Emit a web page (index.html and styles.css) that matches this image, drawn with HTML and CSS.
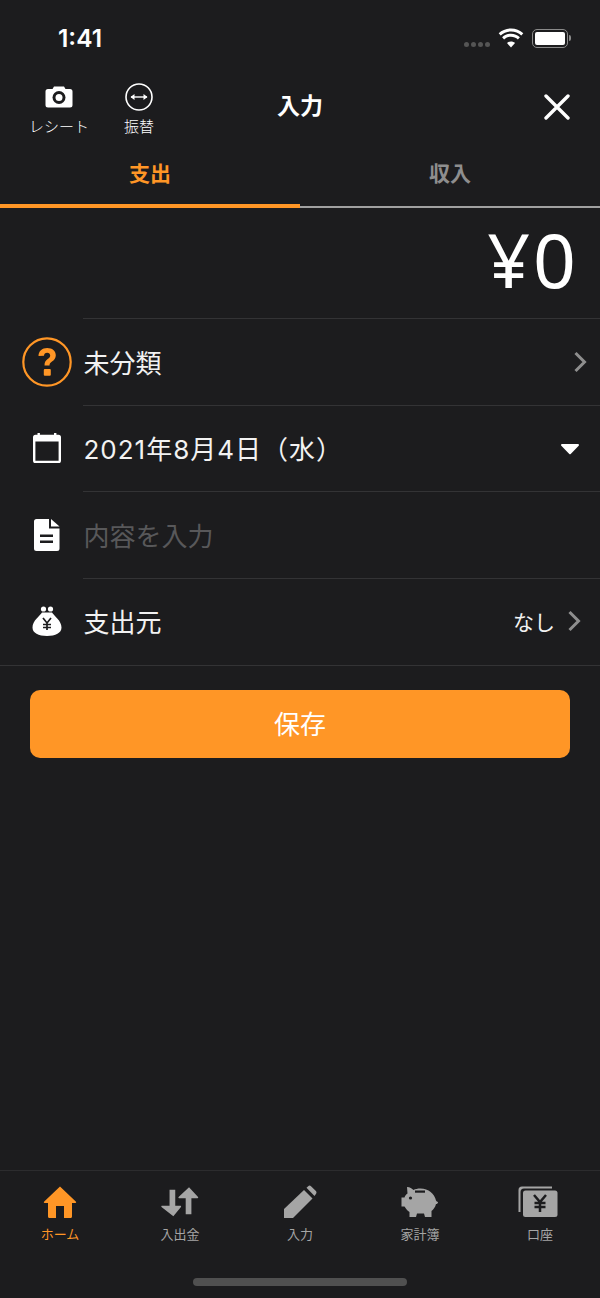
FILE: index.html
```html
<!DOCTYPE html>
<html lang="ja">
<head>
    <meta charset="UTF-8">
    <meta name="viewport" content="width=device-width, initial-scale=1.0">
    <title>入力</title>
    <link rel="stylesheet" href="styles.css">
</head>
<body>
    <div class="screen">
        <div class="status-bar">
            <span class="time">1:41</span>
            <div class="status-icons">
                <div class="signal"><i></i><i></i><i></i><i></i></div>
                <svg width="26" height="20" viewBox="0 0 26 20"><path d="M13 3.500c4 0 7.500 1.500 10.300 4l2-2.300C22 2.300 17.700.5 13 .5S4 2.300.7 5.200l2 2.300c2.800-2.500 6.300-4 10.300-4z" fill="#fff"/><path d="M13 8.800c2.700 0 5.100 1 6.900 2.700l2-2.300C19.500 7.100 16.400 5.800 13 5.800S6.500 7.100 4.100 9.200l2 2.300c1.800-1.700 4.200-2.700 6.900-2.700z" fill="#fff"/><path d="M13 13.500c-1.500 0-2.900.5-4 1.500l4 4.500 4-4.500c-1.100-1-2.500-1.500-4-1.500z" fill="#fff"/></svg>
                <div class="battery"><div class="battery-fill"></div></div>
                <div class="battery-cap"></div>
            </div>
        </div>

        <div class="nav">
            <div class="nav-left">
                <div class="nav-btn">
                    <svg width="28" height="24" viewBox="0 0 28 24"><path d="M9 1.500h10l1.500 2.500H25a2.500 2.500 0 0 1 2.500 2.500v13.500A2.500 2.500 0 0 1 25 22.500H3A2.500 2.500 0 0 1 .5 20V6.500A2.500 2.500 0 0 1 3 4h4.500z" fill="#fff"/><circle cx="14" cy="12.500" r="6.500" fill="#1c1c1e"/><circle cx="14" cy="12.500" r="3.500" fill="#fff"/></svg>
                    <span>レシート</span>
                </div>
                <div class="nav-btn transfer">
                    <svg width="28" height="28" viewBox="0 0 28 28"><circle cx="14" cy="14" r="13" fill="none" stroke="#fff" stroke-width="1.600"/><path d="M6 14h16" stroke="#fff" stroke-width="1.400"/><path d="M9.500 11l-4 3 4 3zM18.500 11l4 3-4 3z" fill="#fff"/></svg>
                    <span>振替</span>
                </div>
            </div>
            <h1 class="nav-title">入力</h1>
            <svg class="close" width="26" height="26" viewBox="0 0 26 26"><path d="M2 2l22 22M24 2L2 24" stroke="#fff" stroke-width="3.400" stroke-linecap="round"/></svg>
        </div>

        <div class="tabs">
            <div class="tab active">支出</div>
            <div class="tab">収入</div>
        </div>

        <div class="amount">¥0</div>

        <div class="row first">
            <div class="row-icon">
                <svg width="50" height="50" viewBox="0 0 50 50"><circle cx="25" cy="25" r="23.700" fill="none" stroke="#ff9626" stroke-width="2.200"/><path d="M16.500 19c0-5 3.600-8 8.700-8 5 0 8.600 2.800 8.600 7.200 0 3.200-1.700 4.800-3.800 6.300-1.800 1.300-2.500 2.100-2.500 4H22.500c0-3.400 1.100-4.900 3.200-6.400 1.600-1.100 2.500-1.900 2.500-3.500 0-1.700-1.200-2.800-3-2.800-2 0-3.100 1.200-3.200 2.900z" fill="#ff9626"/><rect x="21.800" y="32" width="7" height="6.800" rx="1" fill="#ff9626"/></svg>
            </div>
            <div class="row-text">未分類</div>
            <svg class="chevron" width="14" height="22" viewBox="0 0 14 22"><path d="M2.500 2l9 9-9 9" fill="none" stroke="#8e8e8e" stroke-width="3"/></svg>
        </div>
        <div class="row">
            <div class="row-icon">
                <svg width="28" height="30" viewBox="0 0 28 30"><path d="M2.500 3h23A1.300 1.300 0 0 1 26.800 4.300v23.400A1.300 1.300 0 0 1 25.500 29h-23a1.300 1.300 0 0 1-1.300-1.300V4.300A1.300 1.300 0 0 1 2.500 3z" fill="none" stroke="#fff" stroke-width="2.400"/><path d="M1.500 3h25v5.500h-25z" fill="#fff"/><rect x="4.500" y="0" width="2.400" height="5" fill="#fff"/><rect x="21" y="0" width="2.400" height="5" fill="#fff"/></svg>
            </div>
            <div class="row-text date">2021年8月4日（水）</div>
            <svg class="caret" width="18" height="11" viewBox="0 0 18 11"><path d="M1 0h16a1 1 0 0 1 .7 1.700L9.700 10a1 1 0 0 1-1.400 0L.3 1.700A1 1 0 0 1 1 0z" fill="#fff"/></svg>
        </div>
        <div class="row">
            <div class="row-icon">
                <svg width="26" height="32" viewBox="0 0 26 32"><path d="M2.500 0H15v9.500h10.500V29.500A2.500 2.500 0 0 1 23 32H2.500A2.500 2.500 0 0 1 0 29.500v-27A2.500 2.500 0 0 1 2.500 0z" fill="#fff"/><path d="M17 0l8.500 7.500H17z" fill="#fff"/><rect x="6" y="15.500" width="13" height="2.500" fill="#1c1c1e"/><rect x="6" y="21.500" width="13" height="2.500" fill="#1c1c1e"/></svg>
            </div>
            <div class="row-text placeholder">内容を入力</div>
        </div>
        <div class="row last">
            <div class="row-icon">
                <svg width="30" height="30" viewBox="0 0 30 30"><circle cx="11.500" cy="3" r="2.600" fill="#fff"/><circle cx="18.500" cy="3" r="2.600" fill="#fff"/><path d="M10 6.500h10c2 3.500 9.500 8 9.500 15 0 5.500-6 8.500-14.500 8.500S.5 27 .5 21.500c0-7 7.500-11.500 9.500-15z" fill="#fff"/><path d="M11 12l4 5 4-5M15 17v7M11 18.500h8M11 21.500h8" fill="none" stroke="#1c1c1e" stroke-width="1.700"/></svg>
            </div>
            <div class="row-text">支出元</div>
            <span class="row-value">なし</span>
            <svg class="chevron" width="14" height="22" viewBox="0 0 14 22"><path d="M2.500 2l9 9-9 9" fill="none" stroke="#8e8e8e" stroke-width="3"/></svg>
        </div>

        <div class="save-wrap">
            <button class="save">保存</button>
        </div>

        <div class="tabbar">
            <div class="tabbar-item active">
                <svg width="34" height="34" viewBox="0 0 34 34"><path d="M17 1.500L33 16.800c.4.400.1 1.200-.5 1.200H29v13.500a1.500 1.500 0 0 1-1.500 1.500H21V21h-8v12H6.500A1.500 1.500 0 0 1 5 31.500V18H1.500c-.6 0-.9-.8-.5-1.200z" fill="#ff9626"/></svg>
                <span>ホーム</span>
            </div>
            <div class="tabbar-item">
                <svg width="38" height="34" viewBox="0 0 40 34"><path d="M9 4h6v17h5.500c.6 0 .9.700.5 1.200L13 32 .5 22.200c-.4-.5-.1-1.200.5-1.200H9z" fill="#a5a5a5"/><path d="M26 30h6V13h6.500c.6 0 .9-.7.500-1.200L29.500 1.500 18.500 11.800c-.4.500-.1 1.200.5 1.200H26z" fill="#a5a5a5"/></svg>
                <span>入出金</span>
            </div>
            <div class="tabbar-item">
                <svg width="34" height="34" viewBox="0 0 34 34"><path d="M1 33v-9L21 5l8.500 8.500L10 33z" fill="#a5a5a5"/><path d="M23.500 2.800l1.700-1.600c.8-.8 2-.8 2.800 0l4.900 4.900c.8.800.8 2 0 2.800L31.500 11z" fill="#a5a5a5"/></svg>
                <span>入力</span>
            </div>
            <div class="tabbar-item">
                <svg width="38" height="34" viewBox="0 0 38 34"><path d="M6 2c3 0 5 1.500 6.500 3 1.800-1 4-1.500 7-1.500 8 0 14 5 15.500 12 .3 1 1.200 1 2 1.500 0 1.500-1 2-2 2-.7 3-2.500 5.500-4.500 7V32h-6.500l-1-3.500H16l-1 3.500H8.500v-5C6 25.500 4.500 23 3.500 21.500H.5v-9h3C4 10.500 5 9.500 6.500 8.500z" fill="#a5a5a5"/><rect x="14" y="5.500" width="10" height="2.200" fill="#1c1c1e"/><circle cx="9.500" cy="13" r="1.600" fill="#1c1c1e"/></svg>
                <span>家計簿</span>
            </div>
            <div class="tabbar-item account">
                <svg width="40" height="32" viewBox="0 0 40 32"><path d="M.5 26V4A3.500 3.500 0 0 1 4 .5h30v2H6A3.500 3.500 0 0 0 2.500 6v20z" fill="#a5a5a5"/><rect x="5" y="4.500" width="34.500" height="26.500" rx="2.500" fill="#a5a5a5"/><path d="M16 9l6 7 6-7M22 16v10M16.500 17h11M16.500 21h11" fill="none" stroke="#1c1c1e" stroke-width="2.500"/></svg>
                <span>口座</span>
            </div>
        </div>
        <div class="home-indicator"></div>
    </div>
</body>
</html>
```

FILE: styles.css
```css
* {
    box-sizing: border-box;
}
body {
    margin: 0;
    background: #1c1c1e;
    color: #fff;
    font-family: "Noto Sans CJK JP", "Noto Sans", sans-serif;
}
.screen {
    width: 600px;
    height: 1298px;
    display: flex;
    flex-direction: column;
}

/* status bar */
.status-bar {
    height: 76px;
    flex: none;
    display: flex;
    justify-content: space-between;
    align-items: flex-start;
    padding: 24px 29px 0 58px;
}
.time {
    font-family: Inter, sans-serif;
    font-size: 24.5px;
    line-height: 28px;
    font-weight: 600;
}
.status-icons {
    display: flex;
    align-items: center;
    margin-top: 4px;
}
.signal {
    display: flex;
    gap: 2px;
    margin: 12px 8px 0 0;
}
.signal i {
    width: 5px;
    height: 5px;
    border-radius: 50%;
    background: #555;
}
.battery {
    width: 36px;
    height: 19px;
    margin-left: 8px;
    border: 1.500px solid #8a8a8a;
    border-radius: 5px;
    padding: 2px;
}
.battery-fill {
    height: 100%;
    background: #fff;
    border-radius: 2px;
}
.battery-cap {
    width: 2px;
    height: 6px;
    margin-left: 1px;
    background: #8a8a8a;
    border-radius: 0 2px 2px 0;
}

/* nav */
.nav {
    height: 64px;
    flex: none;
    display: flex;
    justify-content: space-between;
    align-items: center;
    padding: 0 30px 0 29px;
    position: relative;
}
.nav-left {
    display: flex;
    gap: 35px;
    align-items: flex-start;
    margin-top: 3px;
}
.nav-btn {
    display: flex;
    flex-direction: column;
    align-items: center;
    justify-content: flex-end;
    height: 54px;
    font-size: 15px;
    line-height: 22px;
    font-weight: 300;
    color: #fff;
}
.nav-btn svg {
    margin-bottom: 6px;
}
.nav-btn.transfer svg {
    margin-bottom: 4px;
}
.nav-title {
    position: absolute;
    left: 0;
    right: 0;
    top: 12px;
    margin: 0;
    text-align: center;
    font-size: 23px;
    font-weight: 700;
    line-height: 32px;
}
.close {
    margin-top: -2px;
}

/* tabs */
.tabs {
    display: flex;
    height: 68px;
    flex: none;
}
.tab {
    flex: 1;
    text-align: center;
    font-size: 21px;
    font-weight: 700;
    line-height: 30px;
    padding-top: 17px;
    color: #8e8e8e;
    border-bottom: 2px solid #a0a0a0;
}
.tab.active {
    color: #ff9626;
    border-bottom: 4px solid #ff9626;
}

.amount {
    height: 110px;
    flex: none;
    padding-right: 21px;
    text-align: right;
    font-family: "Noto Sans", sans-serif;
    font-size: 75px;
    line-height: 102px;
    letter-spacing: 3px;
}

/* rows */
.row {
    height: 86.7px;
    flex: none;
    display: flex;
    align-items: center;
    position: relative;
    padding-right: 13px;
}
.row::before {
    content: "";
    position: absolute;
    top: 0;
    left: 83px;
    right: 0;
    height: 1px;
    background: #333335;
}
.row.first {
    padding-top: 2px;
}
.row.last {
    height: 87.7px;
    padding-right: 19px;
    border-bottom: 1px solid #333335;
}
.row-icon {
    width: 83.5px;
    padding-left: 11px;
    flex: none;
    display: flex;
    justify-content: center;
}
.row-text {
    flex: 1;
    font-size: 26px;
    line-height: 36px;
    color: #f2f2f2;
}
/* digits in the date run wider than the CJK font's */
.date {
    font-family: Inter, "Noto Sans CJK JP", sans-serif;
    letter-spacing: 1px;
    margin-top: 3px;
}
.placeholder {
    color: #58585a;
}
.row-value {
    font-size: 21px;
    margin-right: 12px;
    color: #f2f2f2;
}
.caret {
    margin: 2px 8px 0 0;
}

.save-wrap {
    padding: 24.5px 30px 0;
    flex: 1;
}
.save {
    display: block;
    width: 100%;
    height: 68px;
    padding-bottom: 4px;
    border: none;
    border-radius: 10px;
    background: #ff9626;
    color: #fff;
    font-family: inherit;
    font-size: 26px;
}

/* bottom tab bar */
.tabbar {
    height: 108px;
    flex: none;
    display: flex;
    border-top: 1px solid #2c2c2e;
    padding-top: 13px;
}
.tabbar-item {
    flex: 1;
    display: flex;
    flex-direction: column;
    align-items: center;
    font-size: 13px;
    line-height: 20px;
    color: #a5a5a5;
}
.tabbar-item svg {
    height: 36px;
    margin-bottom: 4px;
}
.tabbar-item.account svg {
    margin-left: -4px;
}
.tabbar-item.active {
    color: #ff9626;
}
.home-indicator {
    width: 214px;
    height: 8px;
    flex: none;
    margin: 0 auto 12px;
    border-radius: 4px;
    background: #505050;
}
```
